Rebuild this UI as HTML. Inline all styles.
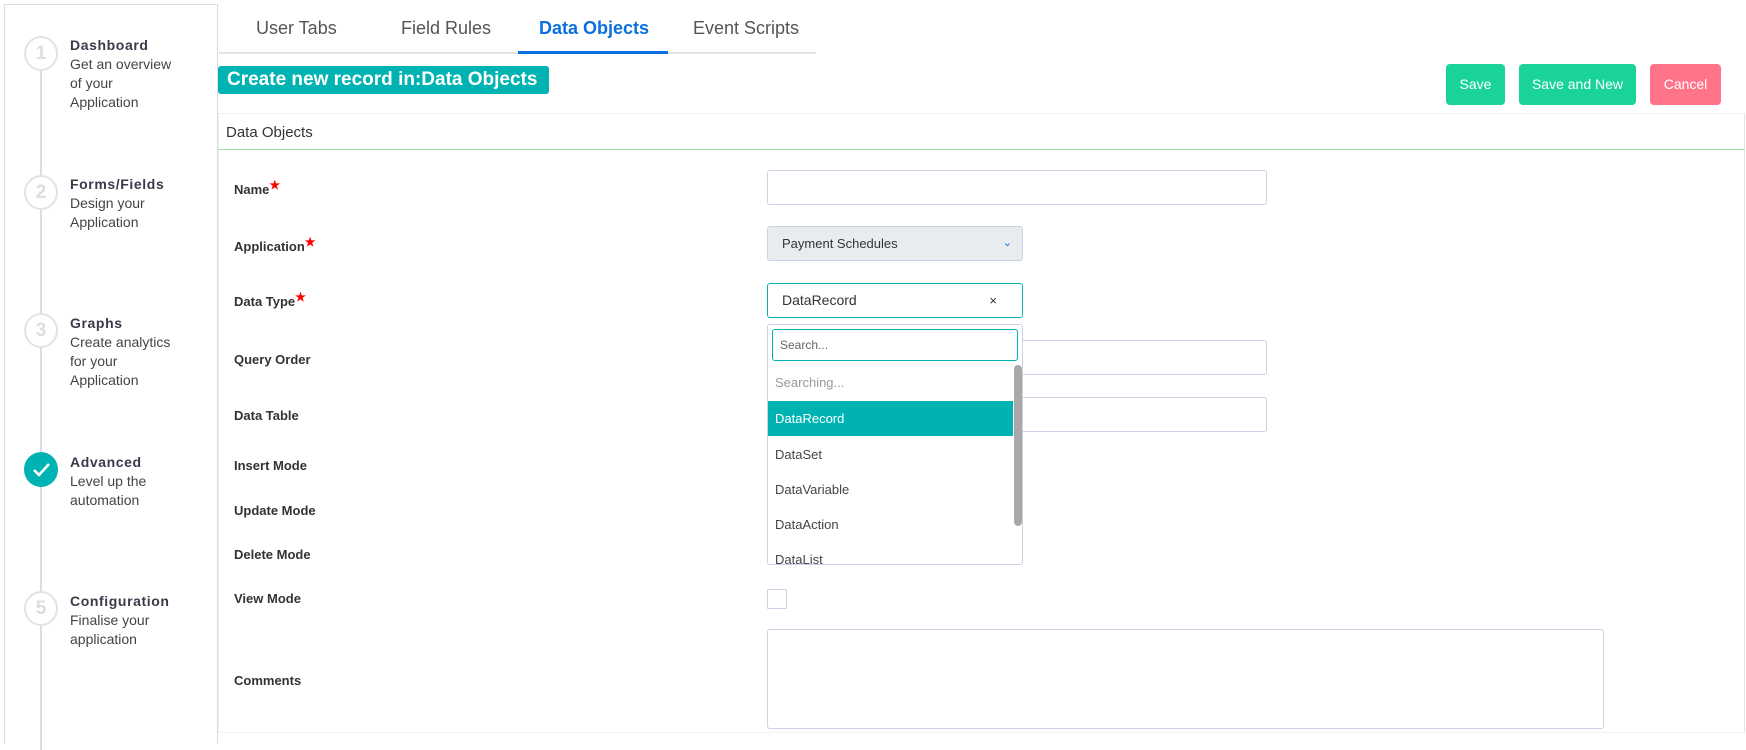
<!DOCTYPE html>
<html><head><style>
*{box-sizing:border-box;margin:0;padding:0}
body{width:1746px;height:729px;overflow:hidden;background:#fff;font-family:"Liberation Sans",sans-serif;position:relative;color:#333}
.a{position:absolute}
.side{left:4px;top:4px;width:214px;height:740px;border:1px solid #ddd;border-bottom:none}
.vl{left:40px;top:70px;width:2px;height:680px;background:#ddd}
.c{width:34px;height:35px;border-radius:50%;border:2px solid #e3e3e3;background:#fff;color:#ddd;font-weight:bold;font-size:19px;text-align:center;line-height:31px;left:24px}
.st{left:70px;font-size:14px;line-height:19px;color:#444}
.st b{display:block;font-size:14px;letter-spacing:.6px;color:#3a3a4a}
.tab{top:18px;font-size:18px;color:#555}
.lbl{left:234px;font-size:13px;font-weight:bold;color:#333}
.lbl i{color:red;font-style:normal;font-size:12px;vertical-align:top;position:relative;top:-4px}
.inp{border:1px solid #c9d3e3;border-radius:3px;background:#fff}
.btn{top:64px;height:41px;border-radius:4px;color:#fff;font-size:14px;text-align:center;line-height:41px}
.it{left:775px;font-size:13px;color:#444}
</style></head><body>
<div class="a side"></div>
<div class="a vl"></div>
<div class="a c" style="top:36px">1</div>
<div class="a c" style="top:175px">2</div>
<div class="a c" style="top:313px">3</div>
<div class="a c" style="top:452px;background:#00b3b3;border-color:#00b3b3"><svg width="30" height="31" viewBox="0 0 30 31"><path d="M8 16l5 5 10-11" stroke="#fff" stroke-width="2.6" fill="none"/></svg></div>
<div class="a c" style="top:591px">5</div>
<div class="a st" style="top:36px"><b>Dashboard</b>Get an overview<br>of your<br>Application</div>
<div class="a st" style="top:175px"><b>Forms/Fields</b>Design your<br>Application</div>
<div class="a st" style="top:314px"><b>Graphs</b>Create analytics<br>for your<br>Application</div>
<div class="a st" style="top:453px"><b>Advanced</b>Level up the<br>automation</div>
<div class="a st" style="top:592px"><b>Configuration</b>Finalise your<br>application</div>

<div class="a" style="left:219px;top:52px;width:597px;height:2px;background:#e2e4e8"></div>
<div class="a" style="left:518px;top:51px;width:150px;height:3px;background:#0a6fdf"></div>
<div class="a tab" style="left:256px">User Tabs</div>
<div class="a tab" style="left:401px">Field Rules</div>
<div class="a tab" style="left:539px;color:#0a6fdf;font-weight:bold">Data Objects</div>
<div class="a tab" style="left:693px">Event Scripts</div>

<div class="a" style="left:218px;top:66px;width:331px;height:28px;background:#00b3b3;border-radius:3px;color:#fff;font-weight:bold;font-size:19px;line-height:28px;padding-left:9px;white-space:nowrap;overflow:hidden">Create new record in:Data Objects</div>
<div class="a btn" style="left:1446px;width:59px;background:#19d399">Save</div>
<div class="a btn" style="left:1519px;width:117px;background:#19d399">Save and New</div>
<div class="a btn" style="left:1650px;width:71px;background:#ff7489">Cancel</div>

<div class="a" style="left:218px;top:113px;width:1527px;height:620px;border:1px solid #f0f0f0;border-right-color:#e4e4e4"></div>
<div class="a" style="left:226px;top:124px;font-size:15px;color:#333">Data Objects</div>
<div class="a" style="left:218px;top:149px;width:1527px;height:1px;background:#9fe09f"></div>

<div class="a lbl" style="top:182px">Name<i>★</i></div>
<div class="a lbl" style="top:239px">Application<i>★</i></div>
<div class="a lbl" style="top:294px">Data Type<i>★</i></div>
<div class="a lbl" style="top:352px">Query Order</div>
<div class="a lbl" style="top:408px">Data Table</div>
<div class="a lbl" style="top:458px">Insert Mode</div>
<div class="a lbl" style="top:503px">Update Mode</div>
<div class="a lbl" style="top:547px">Delete Mode</div>
<div class="a lbl" style="top:591px">View Mode</div>
<div class="a lbl" style="top:673px">Comments</div>

<div class="a inp" style="left:767px;top:170px;width:500px;height:35px"></div>
<div class="a inp" style="left:767px;top:226px;width:256px;height:35px;background:#e9ecef;font-size:13px;line-height:33px;padding-left:14px;color:#333">Payment Schedules<span style="position:absolute;right:10px;color:#0a6fdf;font-size:11px">&#8964;</span></div>
<div class="a inp" style="left:767px;top:340px;width:500px;height:35px"></div>
<div class="a inp" style="left:767px;top:397px;width:500px;height:35px"></div>
<div class="a inp" style="left:767px;top:283px;width:256px;height:35px;border-color:#00b3b3;font-size:14px;line-height:33px;padding-left:14px;color:#333">DataRecord<span style="position:absolute;right:25px;font-size:13px">×</span></div>
<div class="a inp" style="left:767px;top:324px;width:256px;height:241px;overflow:hidden">
 <div class="a inp" style="left:4px;top:4px;width:246px;height:32px;border-color:#00b3b3;font-size:12px;color:#666;line-height:30px;padding-left:7px">Search...</div>
 <div class="a" style="left:0;top:76px;width:245px;height:35px;background:#00b3b3"></div>
 <div class="a" style="left:246px;top:40px;width:8px;height:161px;background:#a8a8a8;border-radius:4px"></div>
</div>
<div class="a it" style="top:375px;color:#999">Searching...</div>
<div class="a it" style="top:411px;color:#fff">DataRecord</div>
<div class="a it" style="top:447px">DataSet</div>
<div class="a it" style="top:482px">DataVariable</div>
<div class="a it" style="top:517px">DataAction</div>
<div class="a it" style="top:552px;height:12px;overflow:hidden">DataList</div>
<div class="a inp" style="left:767px;top:589px;width:20px;height:20px;border-radius:1px"></div>
<div class="a inp" style="left:767px;top:629px;width:837px;height:100px"></div>
</body></html>
